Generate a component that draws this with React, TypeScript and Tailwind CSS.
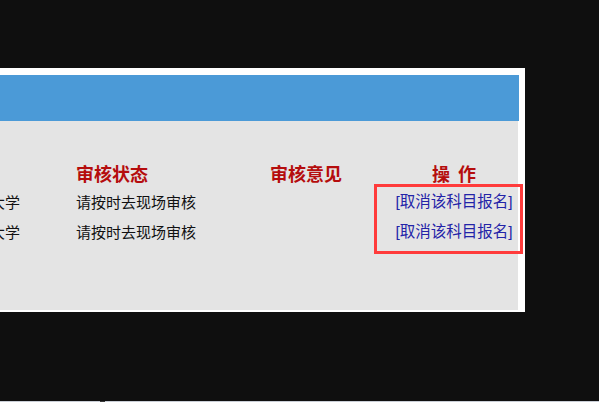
const rows = [
  { school: '北京大学', status: '请按时去现场审核', opinion: '' },
  { school: '北京大学', status: '请按时去现场审核', opinion: '' },
]

const font = { fontFamily: '"Liberation Sans", "Noto Sans CJK SC", sans-serif' }

export default function App() {
  return (
    <div className="w-[599px] h-[402px] bg-[#0f0f0f] flex flex-col overflow-hidden" style={font}>
      <div className="h-[68px] shrink-0" />
      <div className="relative w-[525px] bg-white pt-[7px] pr-[6px] pb-[2px]">
        <div className="h-[46px] bg-[#4b9ad7]" />
        <div className="h-[189px] mr-px bg-[#e4e4e4] pt-[41px]">
          <div className="flex h-[25px] items-center text-[18px] font-bold text-[#b50d0d] leading-none">
            <div className="w-[76px] shrink-0" />
            <div className="w-[194px] shrink-0">审核状态</div>
            <div className="w-[120px] shrink-0">审核意见</div>
            <div className="w-[128px] shrink-0 flex justify-center">
              <span>操</span>
              <span className="inline-block w-[8px]" />
              <span>作</span>
            </div>
          </div>
          {rows.map((r, i) => (
            <div key={i} className="flex h-[30px] items-center text-[15px] text-[#111] leading-none">
              <div className="w-[20px] shrink-0 flex justify-end overflow-hidden whitespace-nowrap">{r.school}</div>
              <div className="w-[56px] shrink-0" />
              <div className="w-[194px] shrink-0 whitespace-nowrap">{r.status}</div>
              <div className="w-[120px] shrink-0">{r.opinion}</div>
              <div className="w-[128px] shrink-0 flex justify-center">
                <a className="text-[15.5px] text-[#2323a8] whitespace-nowrap cursor-pointer">[取消该科目报名]</a>
              </div>
            </div>
          ))}
        </div>
        <div className="absolute left-[374px] top-[116px] w-[149px] h-[70px] border-[3px] border-[#ff3b3b]" />
      </div>
      <div className="flex-1" />
      <div className="h-px bg-[#c9ced6] flex">
        <div className="w-[100px]" />
        <div className="w-[5px] bg-[#3a3a3a]" />
      </div>
    </div>
  )
}
